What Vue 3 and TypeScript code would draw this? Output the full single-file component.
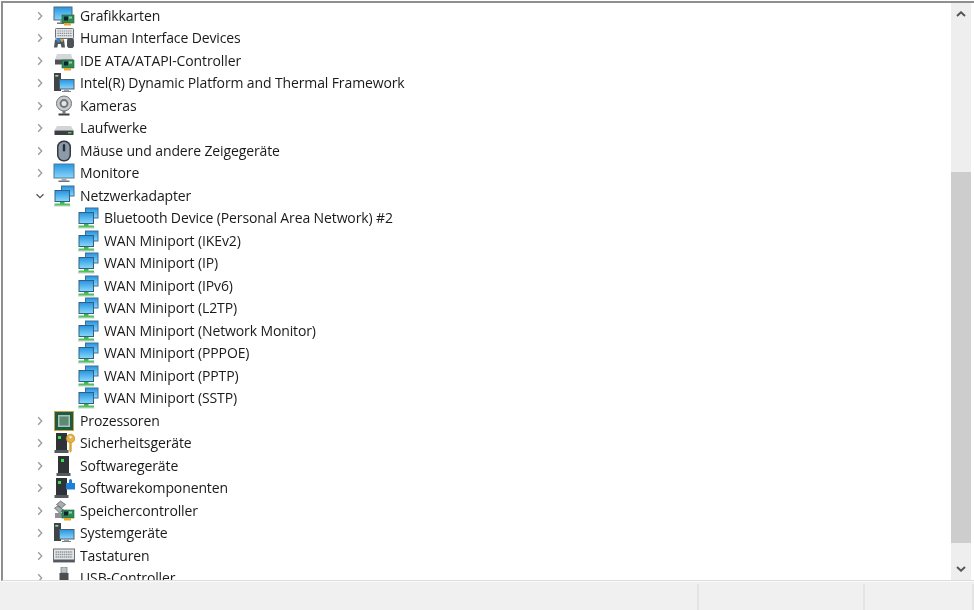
<script setup lang="ts">
interface Row {
  label: string;
  icon: string;
  state?: 'open' | 'closed' | 'leaf';
}

const rows: Row[] = [
  { label: 'Grafikkarten', icon: 'gpu' },
  { label: 'Human Interface Devices', icon: 'hid' },
  { label: 'IDE ATA/ATAPI-Controller', icon: 'ide' },
  { label: 'Intel(R) Dynamic Platform and Thermal Framework', icon: 'sys' },
  { label: 'Kameras', icon: 'cam' },
  { label: 'Laufwerke', icon: 'drive' },
  { label: 'Mäuse und andere Zeigegeräte', icon: 'mouse' },
  { label: 'Monitore', icon: 'monitor' },
  { label: 'Netzwerkadapter', icon: 'net', state: 'open' },
  { label: 'Bluetooth Device (Personal Area Network) #2', icon: 'net', state: 'leaf' },
  { label: 'WAN Miniport (IKEv2)', icon: 'net', state: 'leaf' },
  { label: 'WAN Miniport (IP)', icon: 'net', state: 'leaf' },
  { label: 'WAN Miniport (IPv6)', icon: 'net', state: 'leaf' },
  { label: 'WAN Miniport (L2TP)', icon: 'net', state: 'leaf' },
  { label: 'WAN Miniport (Network Monitor)', icon: 'net', state: 'leaf' },
  { label: 'WAN Miniport (PPPOE)', icon: 'net', state: 'leaf' },
  { label: 'WAN Miniport (PPTP)', icon: 'net', state: 'leaf' },
  { label: 'WAN Miniport (SSTP)', icon: 'net', state: 'leaf' },
  { label: 'Prozessoren', icon: 'cpu' },
  { label: 'Sicherheitsgeräte', icon: 'sec' },
  { label: 'Softwaregeräte', icon: 'soft' },
  { label: 'Softwarekomponenten', icon: 'comp' },
  { label: 'Speichercontroller', icon: 'store' },
  { label: 'Systemgeräte', icon: 'sys' },
  { label: 'Tastaturen', icon: 'kbd' },
  { label: 'USB-Controller', icon: 'usb' },
];
</script>

<template>
  <div class="window">
    <svg class="defs" width="0" height="0">
      <defs>
        <linearGradient id="screen" x1="0" y1="0" x2="0" y2="1">
          <stop offset="0" stop-color="#2a97e2" />
          <stop offset="1" stop-color="#86d4f8" />
        </linearGradient>
        <symbol id="board" viewBox="0 0 22 22">
          <rect x="9" y="10" width="12" height="8" fill="#2e8b57" stroke="#1f5f3c" stroke-width=".6" />
          <rect x="11" y="11.5" width="4" height="4" fill="#123" />
          <rect x="16" y="11.5" width="3" height="2" fill="#8fd0a5" />
          <rect x="11" y="18" width="7" height="2.5" fill="#e8a92c" />
        </symbol>
        <symbol id="gpu" viewBox="0 0 22 22">
          <rect x="0.5" y="1.5" width="19" height="14" fill="#4b6a80" />
          <rect x="1.5" y="2.5" width="17" height="12" fill="url(#screen)" />
          <rect x="7" y="15.5" width="5" height="2" fill="#9aa3aa" />
          <rect x="4" y="17.5" width="10" height="1.5" fill="#777" />
          <use href="#board" width="22" height="22" />
        </symbol>
        <symbol id="hid" viewBox="0 0 22 22">
          <rect x="2.500" y="1.500" width="18" height="10" rx=".8" fill="#e2e4e6" stroke="#6a7077" />
          <path d="M4.500 4h14M4.500 6.300h14M4.500 8.600h14" stroke="#8d939a" stroke-width="1.200" stroke-dasharray="1.400 .7" />
          <path d="M1 20.500l1-8h9l1 8H8.500l-.8-3.500H5L4.300 20.500z" fill="#50565d" />
          <circle cx="5.500" cy="13.500" r="2" fill="#2f86d6" />
          <circle cx="9" cy="13.500" r="1.300" fill="#e2a32c" />
          <rect x="14" y="11" width="7" height="10" rx="2.800" fill="#4d5359" />
        </symbol>
        <symbol id="ide" viewBox="0 0 22 22">
          <path d="M4 4h14l2 5.500H2z" fill="#d5d8db" />
          <rect x="2" y="9.500" width="18" height="5" fill="#4d5257" />
          <use href="#board" width="22" height="22" />
        </symbol>
        <symbol id="sys" viewBox="0 0 22 22">
          <rect x="1" y="1" width="7" height="18" fill="#3f4449" />
          <rect x="2.300" y="3" width="3" height="1.600" fill="#a5d6a7" />
          <rect x="6" y="7" width="15.500" height="10.500" fill="#4c5f70" />
          <rect x="7" y="8" width="13.500" height="8.500" fill="url(#screen)" />
          <rect x="11" y="17.500" width="5" height="1.500" fill="#9aa3aa" />
          <rect x="9" y="19" width="9" height="1" fill="#7a8087" />
        </symbol>
        <symbol id="cam" viewBox="0 0 22 22">
          <circle cx="11" cy="8.500" r="7.500" fill="#c7c9cb" stroke="#6f7479" />
          <circle cx="11" cy="8.500" r="4.400" fill="#6f7478" />
          <circle cx="11" cy="8.500" r="2.500" fill="#dfe7ee" />
          <rect x="9.500" y="16" width="3" height="2.500" fill="#777" />
          <rect x="5.500" y="18.500" width="11" height="2" fill="#3d4146" />
        </symbol>
        <symbol id="drive" viewBox="0 0 22 22">
          <path d="M4 9h14l2.500 4.500h-19z" fill="#d2d4d6" />
          <rect x="1.500" y="13.500" width="19" height="4.500" fill="#3b3f44" />
          <rect x="15" y="15" width="3.500" height="1.500" fill="#5fc45f" />
        </symbol>
        <symbol id="mouse" viewBox="0 0 22 22">
          <rect x="4" y="0.500" width="14" height="21" rx="6.500" fill="#343a40" />
          <rect x="5.500" y="2" width="11" height="18" rx="5.200" fill="#8c9bac" />
          <rect x="9.800" y="4" width="2.400" height="7.500" rx="1.200" fill="#2b2f33" />
        </symbol>
        <symbol id="monitor" viewBox="0 0 22 22">
          <rect x="0.500" y="1.500" width="21" height="15" fill="#4f7895" />
          <rect x="1.500" y="2.500" width="19" height="13" fill="url(#screen)" />
          <rect x="8.500" y="16.500" width="5" height="2" fill="#a2a9af" />
          <rect x="5.500" y="18.500" width="11" height="1.500" fill="#6e747a" />
        </symbol>
        <symbol id="net" viewBox="0 0 22 22">
          <rect x="8" y="0.500" width="13.500" height="11" fill="#3d6f96" />
          <rect x="9" y="1.500" width="11.500" height="9" fill="url(#screen)" />
          <rect x="1.500" y="5" width="15.500" height="12" fill="#2e6185" />
          <rect x="2.500" y="6" width="13.500" height="10" fill="url(#screen)" />
          <rect x="7" y="17" width="4.500" height="2" fill="#3bb54a" />
          <rect x="1.500" y="18.500" width="15.500" height="2.200" fill="#4ec35a" />
          <rect x="1" y="20.500" width="16.500" height=".9" fill="#b9c0c5" />
        </symbol>
        <symbol id="cpu" viewBox="0 0 22 22">
          <rect x="1" y="1" width="20" height="20" fill="#c9a548" />
          <rect x="2" y="2" width="18" height="18" fill="#1f5a43" />
          <rect x="5" y="5" width="12" height="12" fill="#a9c4b5" />
          <rect x="6.500" y="6.500" width="9" height="9" fill="#5c8a74" />
        </symbol>
        <symbol id="tower" viewBox="0 0 22 22">
          <path d="M3 1h11v17H3z" fill="#2f3337" />
          <path d="M1.500 18h14v3h-14z" fill="#55595e" />
          <rect x="5" y="4" width="3" height="3" fill="#38e04a" />
        </symbol>
        <symbol id="sec" viewBox="0 0 22 22">
          <use href="#tower" width="22" height="22" />
          <circle cx="17.500" cy="6.500" r="4.300" fill="#e5b445" stroke="#a97f22" stroke-width=".6" />
          <circle cx="17.500" cy="5.200" r="1.100" fill="#fff" />
          <path d="M16.300 10h2.400v9l-1.200 1.800-1.200-1.800z" fill="#d9a334" />
        </symbol>
        <symbol id="soft" viewBox="0 0 22 22">
          <path d="M5 1h11v17H5z" fill="#2f3337" />
          <path d="M3.500 18h14v3h-14z" fill="#55595e" />
          <rect x="8" y="4" width="3" height="3" fill="#38e04a" />
        </symbol>
        <symbol id="comp" viewBox="0 0 22 22">
          <use href="#tower" width="22" height="22" />
          <path d="M13 6h3V3.500a1.500 1.500 0 0 1 3 0V6h3v6.500h-9z" fill="#1f7fd6" />
        </symbol>
        <symbol id="store" viewBox="0 0 22 22">
          <path d="M7.500 1l5 3.500-4 3.500-5-3.500zM1.500 8l3.500-2 5.500 4-4 3z" fill="#a8adb2" stroke="#54595e" stroke-width=".7" />
          <rect x="2" y="13" width="7" height="5" fill="#8c9196" />
          <use href="#board" width="22" height="22" />
        </symbol>
        <symbol id="kbd" viewBox="0 0 22 22">
          <rect x="0.500" y="4" width="21" height="13" fill="#e4e6e8" stroke="#6b7076" />
          <path d="M2.500 7h17M2.500 9.500h17M2.500 12h17" stroke="#8f959b" stroke-width="1.400" stroke-dasharray="1.500 .6" />
          <rect x="1" y="14.500" width="20" height="2.500" fill="#555a60" />
        </symbol>
        <symbol id="usb" viewBox="0 0 22 22">
          <rect x="8" y="0" width="6" height="6" fill="#bfc2c5" stroke="#666" stroke-width=".6" />
          <rect x="6.500" y="6" width="9" height="16" fill="#4a4e53" />
        </symbol>
      </defs>
    </svg>

    <div class="body">
      <div class="tree">
        <div
          v-for="row in rows"
          :key="row.label"
          class="row"
          :class="{ leaf: row.state === 'leaf' }"
        >
          <svg v-if="row.state !== 'leaf'" class="chev" :class="{ open: row.state === 'open' }" width="8" height="10" viewBox="0 0 8 10">
            <path v-if="row.state === 'open'" d="M0.500 3.200 4 6.700 7.500 3.200" />
            <path v-else d="M2.200 1.300 5.700 5 2.200 8.700" />
          </svg>
          <svg class="icon" width="22" height="22"><use :href="'#' + row.icon" width="22" height="22" /></svg>
          <span class="label">{{ row.label }}</span>
        </div>
      </div>

      <div class="scrollbar">
        <div class="arrow">
          <svg width="10" height="6" viewBox="0 0 10 6"><path d="M1 5 5 1.300 9 5" /></svg>
        </div>
        <div class="track">
          <div class="thumb"></div>
        </div>
        <div class="arrow">
          <svg width="10" height="6" viewBox="0 0 10 6"><path d="M1 1 5 4.700 9 1" /></svg>
        </div>
      </div>
    </div>

    <div class="status">
      <div class="cell grow"></div>
      <div class="cell mid"></div>
      <div class="cell end"></div>
    </div>
  </div>
</template>

<style scoped>
.window {
  width: 974px;
  height: 610px;
  display: flex;
  flex-direction: column;
  overflow: hidden;
  background: #fff;
  font-family: "Open Sans", "Noto Sans", sans-serif;
  color: #1a1a1a;
}

.defs {
  position: absolute;
}

.body {
  flex: 1;
  min-height: 0;
  display: flex;
  margin: 1px 0 0 1px;
  border-top: 2px solid #8f8f8f;
  border-left: 2px solid #8f8f8f;
  border-bottom: 1px solid #dcdcdc;
}

.tree {
  flex: 1;
  min-width: 0;
  overflow: hidden;
  padding-top: 1.6px;
  filter: blur(0.3px);
}

.row {
  height: 22.5px;
  display: flex;
  align-items: center;
  padding-left: 33px;
  white-space: nowrap;
}

.row.leaf {
  padding-left: 74px;
}

.chev {
  flex: none;
  fill: none;
  stroke: #9a9a9a;
  stroke-width: 1.3;
  margin-right: 9px;
}

.chev.open {
  stroke: #555;
}

.icon {
  flex: none;
  margin-right: 5px;
}

.label {
  font-size: 14px;
  letter-spacing: -0.12px;
  line-height: 22px;
}

.scrollbar {
  flex: none;
  width: 20px;
  margin-right: 3px;
  display: flex;
  flex-direction: column;
  background: #eeeeee;
}

.arrow {
  flex: none;
  height: 22px;
  display: flex;
  align-items: center;
  justify-content: center;
}

.arrow svg {
  fill: none;
  stroke: #555;
  stroke-width: 2;
}

.track {
  flex: 1;
  padding-top: 147px;
  padding-bottom: 15px;
  display: flex;
}

.thumb {
  flex: 1;
  background: #cdcdcd;
}

.status {
  flex: none;
  height: 28px;
  display: flex;
  background: #f0f0f0;
  border-top: 1px solid #fcfcfc;
}

.cell {
  border-right: 2px solid #e4e4e4;
  margin-top: 2px;
}

.grow {
  flex: 1;
}

.mid {
  width: 164px;
}

.end {
  width: 107px;
}
</style>
